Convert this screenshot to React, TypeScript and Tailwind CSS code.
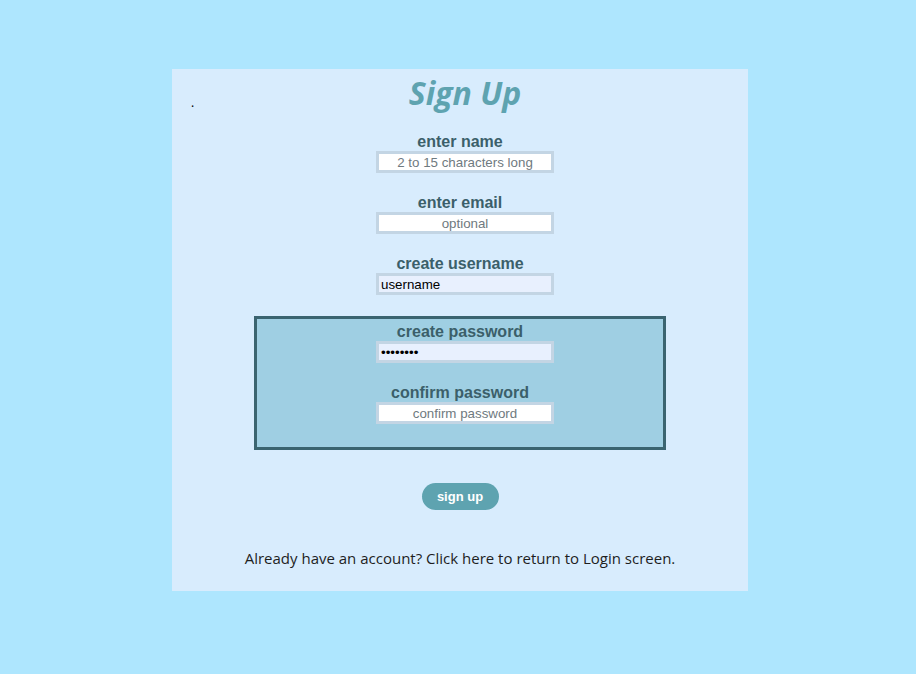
import React from 'react';

const label = "text-[16px] font-bold leading-[18px] text-[#3b5f6a] font-['Liberation_Sans',Arial,sans-serif]";
const input =
  "ml-[10px] w-[178px] h-[22px] border-[3px] border-[#c3d5e4] px-[2px] text-[13.33px] leading-[16px] outline-none font-['Liberation_Sans',Arial,sans-serif] placeholder:text-[#6f7a80]";

function Field({ title, children, top }: { title: string; children: React.ReactNode; top: string }) {
  return (
    <div className={`flex flex-col items-center ${top}`}>
      <div className={label}>{title}</div>
      {children}
    </div>
  );
}

export default function App() {
  return (
    <div className="min-h-screen w-full bg-[#aee6fe] pt-[69px]">
      <div className="relative ml-[172px] w-[576px] h-[522px] bg-[#d8ecfd] flex flex-col items-center">
        <span className="absolute left-[19px] top-[28px] text-[12px] leading-[12px] text-black">.</span>

        <h1 className="ml-[10px] mt-[4px] text-[32px] leading-[40px] font-bold italic text-[#5ea3b0] font-['Open_Sans','Noto_Sans',sans-serif]">
          Sign Up
        </h1>

        <Field title="enter name" top="mt-[20px]">
          <input className={`${input} bg-white text-center`} placeholder="2 to 15 characters long" />
        </Field>

        <Field title="enter email" top="mt-[21px]">
          <input className={`${input} bg-white text-center`} placeholder="optional" />
        </Field>

        <Field title="create username" top="mt-[21px]">
          <input className={`${input} bg-[#e8f0fe] text-left text-black`} defaultValue="username" />
        </Field>

        <div className="mt-[21px] w-[412px] h-[134px] border-[3px] border-[#3a6470] bg-[#9fcfe3] flex flex-col items-center">
          <Field title="create password" top="mt-[4px]">
            <input type="password" className={`${input} bg-[#e8f0fe] text-left text-black`} defaultValue="password" />
          </Field>
          <Field title="confirm password" top="mt-[21px]">
            <input type="password" className={`${input} bg-white text-center`} placeholder="confirm password" />
          </Field>
        </div>

        <button className="mt-[33px] w-[77px] h-[27px] rounded-full bg-[#5ea3b0] text-white text-[13px] font-bold font-['Liberation_Sans',Arial,sans-serif]">
          sign up
        </button>

        <p className="mt-[37px] text-[15px] leading-[22px] text-[#1e1e1e] font-['Open_Sans','Noto_Sans',sans-serif]">
          Already have an account? Click here to return to Login screen.
        </p>
      </div>
    </div>
  );
}
